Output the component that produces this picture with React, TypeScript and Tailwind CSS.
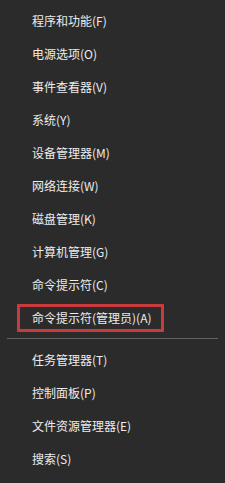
const groups: string[][] = [
  [
    "程序和功能(F)",
    "电源选项(O)",
    "事件查看器(V)",
    "系统(Y)",
    "设备管理器(M)",
    "网络连接(W)",
    "磁盘管理(K)",
    "计算机管理(G)",
    "命令提示符(C)",
    "命令提示符(管理员)(A)",
  ],
  ["任务管理器(T)", "控制面板(P)", "文件资源管理器(E)", "搜索(S)"],
];

const highlighted = "命令提示符(管理员)(A)";

export default function App() {
  return (
    <div
      className="h-[483px] w-[225px] overflow-hidden bg-[#2b2b2b] pt-[4px] text-[12px] text-[#ededed]"
      style={{ fontFamily: '"Noto Sans CJK SC", "Noto Sans", sans-serif' }}
    >
      {groups.map((items, gi) => (
        <div key={gi}>
          {gi > 0 && <div className="mx-[7px] my-[4px] h-px bg-[#646464]" />}
          {items.map((label) =>
            label === highlighted ? (
              <div key={label} className="flex h-[33px] items-center">
                <div className="ml-[17px] flex h-[28px] w-[147px] items-center border-[3px] border-[#c93a3c] pl-[12px]">
                  {label}
                </div>
              </div>
            ) : (
              <div key={label} className="flex h-[33px] items-center pl-[32px]">
                {label}
              </div>
            ),
          )}
        </div>
      ))}
    </div>
  );
}
